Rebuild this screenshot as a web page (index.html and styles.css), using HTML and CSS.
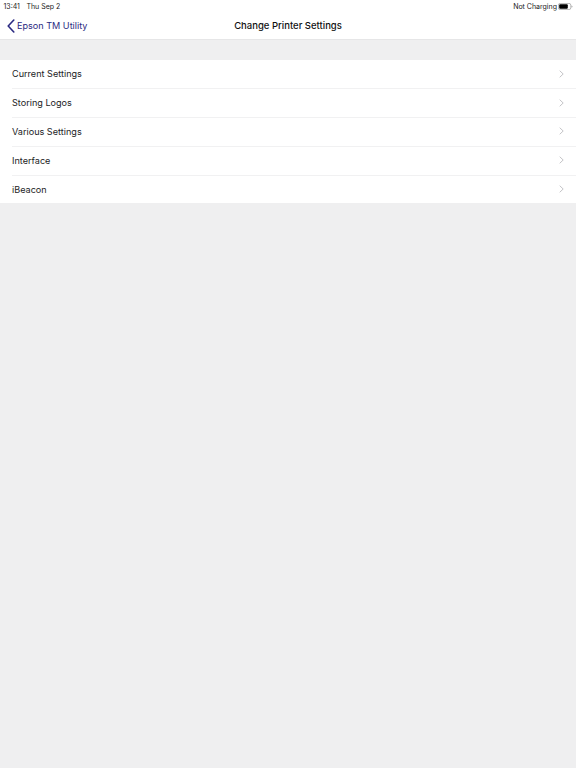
FILE: index.html
```html
<!DOCTYPE html>
<html lang="en">
<head>
<meta charset="utf-8">
<title>Change Printer Settings</title>
<link rel="stylesheet" href="styles.css">
</head>
<body>
<header class="top">
  <div class="status">
    <div class="status-left"><span>13:41</span><span>Thu Sep 2</span></div>
    <div class="status-right">
      <span>Not Charging</span>
      <svg class="battery" width="15" height="7" viewBox="0 0 15 7" aria-hidden="true">
        <rect x="0.4" y="0.4" width="12.4" height="6.2" rx="1.8" fill="none" stroke="#9a9a9a" stroke-width="0.7"/>
        <rect x="1.2" y="1.2" width="8.6" height="4.6" rx="1" fill="#000"/>
        <path d="M13.5 2.4c.7.2 1 .6 1 1.1s-.3.9-1 1.1z" fill="#9a9a9a"/>
      </svg>
    </div>
  </div>
  <nav class="nav">
    <a class="back">
      <svg width="8" height="14" viewBox="0 0 8 14" aria-hidden="true"><path d="M6.8 1 1.2 7l5.6 6" fill="none" stroke="#2b2a82" stroke-width="1.6" stroke-linecap="round" stroke-linejoin="round"/></svg>
      <span>Epson TM Utility</span>
    </a>
    <h1 class="title">Change Printer Settings</h1>
  </nav>
</header>
<ul class="list">
  <li class="row"><span>Current Settings</span><svg class="chev" width="5" height="8" viewBox="0 0 5 8" aria-hidden="true"><path d="M.7.7 4.2 4 .7 7.3" fill="none" stroke="#c4c4c7" stroke-width="1"/></svg></li>
  <li class="row"><span>Storing Logos</span><svg class="chev" width="5" height="8" viewBox="0 0 5 8" aria-hidden="true"><path d="M.7.7 4.2 4 .7 7.3" fill="none" stroke="#c4c4c7" stroke-width="1"/></svg></li>
  <li class="row"><span>Various Settings</span><svg class="chev" width="5" height="8" viewBox="0 0 5 8" aria-hidden="true"><path d="M.7.7 4.2 4 .7 7.3" fill="none" stroke="#c4c4c7" stroke-width="1"/></svg></li>
  <li class="row"><span>Interface</span><svg class="chev" width="5" height="8" viewBox="0 0 5 8" aria-hidden="true"><path d="M.7.7 4.2 4 .7 7.3" fill="none" stroke="#c4c4c7" stroke-width="1"/></svg></li>
  <li class="row"><span>iBeacon</span><svg class="chev" width="5" height="8" viewBox="0 0 5 8" aria-hidden="true"><path d="M.7.7 4.2 4 .7 7.3" fill="none" stroke="#c4c4c7" stroke-width="1"/></svg></li>
</ul>
</body>
</html>
```
FILE: styles.css
```css
* { box-sizing: border-box; }
html, body { margin: 0; padding: 0; }
body {
  width: 576px;
  height: 768px;
  overflow: hidden;
  background: #efeff0;
  font-family: Inter, "Liberation Sans", sans-serif;
  color: #1c1c1e;
}
.top {
  height: 39.5px;
  background: #fff;
  border-bottom: 1px solid #e6e6e7;
}
.status {
  height: 12px;
  display: flex;
  justify-content: space-between;
  align-items: center;
  font-size: 7px;
  color: #222;
  padding: 0 3px 0 3.5px;
}
.status-left { display: flex; gap: 6.5px; }
.status-right { display: flex; align-items: center; gap: 1px; }
.nav {
  height: 27px;
  display: flex;
  align-items: center;
  justify-content: center;
  position: relative;
}
.back {
  position: absolute;
  left: 7px;
  top: 0;
  height: 27px;
  display: flex;
  align-items: center;
  gap: 2px;
  color: #2b2a82;
  font-size: 9.1px;
}
.title {
  margin: 0;
  font-size: 9.5px;
  font-weight: 500;
  color: #111;
}
.list {
  list-style: none;
  margin: 20px 0 0;
  padding: 0;
  background: #fff;
}
.row {
  height: 28.8px;
  margin-left: 12px;
  padding-right: 12px;
  display: flex;
  align-items: center;
  justify-content: space-between;
  font-size: 9.1px;
  box-shadow: 0 1px 0 #f1f1f2;
}
.row:last-child { box-shadow: none; }
```
